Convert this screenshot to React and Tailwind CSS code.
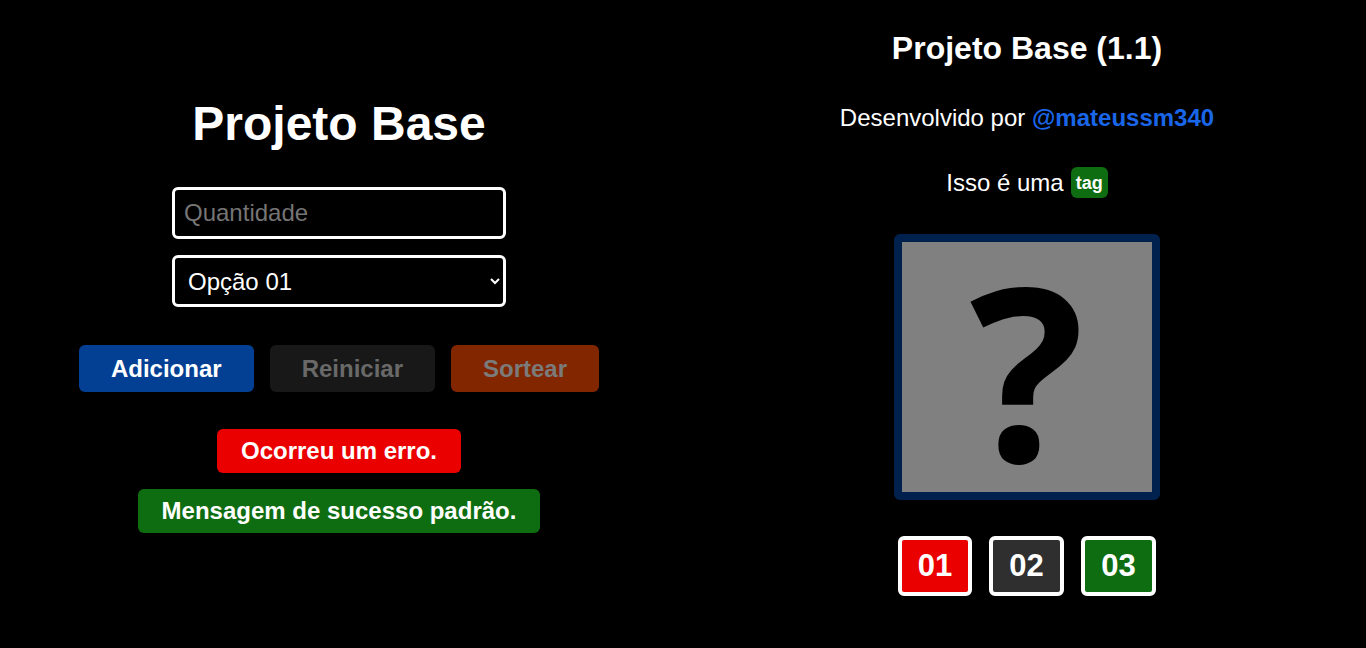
import React, { useState } from "react";

function App() {
  const [qtd, setQtd] = useState("");
  const [opcao, setOpcao] = useState("1");

  return (
    <div className="w-[1366px] h-[648px] bg-black text-white flex gap-[10px] font-['Liberation_Sans',Arial,sans-serif] overflow-hidden">
      {/* Coluna esquerda */}
      <div className="flex-1 flex flex-col items-center pt-[96px]">
        <h1 className="text-[48px] font-bold leading-[55px]">Projeto Base</h1>

        <input
          type="text"
          placeholder="Quantidade"
          value={qtd}
          onChange={(e) => setQtd(e.target.value)}
          className="mt-[36px] w-[334px] h-[52px] px-[9px] bg-black text-white text-[24px] border-[3px] border-white rounded-[6px] placeholder:text-[#757575] outline-none"
        />

        <select
          value={opcao}
          onChange={(e) => setOpcao(e.target.value)}
          className="mt-[16px] w-[334px] h-[52px] px-[9px] bg-black text-white text-[24px] border-[3px] border-white rounded-[6px] outline-none"
        >
          <option value="1">Opção 01</option>
          <option value="2">Opção 02</option>
          <option value="3">Opção 03</option>
        </select>

        <div className="mt-[38px] flex gap-[16px]">
          <button className="h-[47px] px-8 rounded-[6px] bg-[#034094] text-white text-[24px] font-bold">
            Adicionar
          </button>
          <button
            disabled
            className="h-[47px] px-8 rounded-[6px] bg-[#181818] text-[#696969] text-[24px] font-bold"
          >
            Reiniciar
          </button>
          <button
            disabled
            className="h-[47px] px-8 rounded-[6px] bg-[#822600] text-[#7b7b7b] text-[24px] font-bold"
          >
            Sortear
          </button>
        </div>

        <p className="mt-[37px] h-[44px] flex items-center px-6 rounded-[6px] bg-[#eb0000] text-[24px] font-bold">
          Ocorreu um erro.
        </p>
        <p className="mt-[16px] h-[44px] flex items-center px-6 rounded-[6px] bg-[#0f6d11] text-[24px] font-bold">
          Mensagem de sucesso padrão.
        </p>
      </div>

      {/* Coluna direita */}
      <div className="flex-1 flex flex-col items-center pt-[30px]">
        <h2 className="text-[32px] font-bold leading-[37px]">Projeto Base (1.1)</h2>

        <p className="mt-[37px] text-[24px] leading-[28px]">
          Desenvolvido por{" "}
          <a href="#" className="font-bold text-[#1a66e8]">
            @mateussm340
          </a>
        </p>

        <p className="mt-[35px] h-[31px] flex items-center gap-[7px] text-[24px] leading-[28px]">
          <span>Isso é uma</span>
          <span className="h-[31px] flex items-center px-[5px] rounded-[6px] bg-[#0f6d11] text-[18px] font-bold">
            tag
          </span>
        </p>

        <div className="mt-[36px] w-[266px] h-[266px] border-[8px] border-[#00214d] rounded-[6px] bg-[#808080] flex items-center justify-center overflow-hidden">
          <span className="text-[240px] font-bold leading-none text-black font-['Open_Sans',sans-serif] pt-[3px]">
            ?
          </span>
        </div>

        <div className="mt-[36px] flex gap-[17px]">
          <div className="w-[74px] h-[60px] border-[4px] border-white rounded-[6px] bg-[#eb0000] flex items-center justify-center text-[31px] font-bold">
            01
          </div>
          <div className="w-[75px] h-[60px] border-[4px] border-white rounded-[6px] bg-[#2f2f2f] flex items-center justify-center text-[31px] font-bold">
            02
          </div>
          <div className="w-[75px] h-[60px] border-[4px] border-white rounded-[6px] bg-[#0f6d11] flex items-center justify-center text-[31px] font-bold">
            03
          </div>
        </div>
      </div>
    </div>
  );
}

export default App;
